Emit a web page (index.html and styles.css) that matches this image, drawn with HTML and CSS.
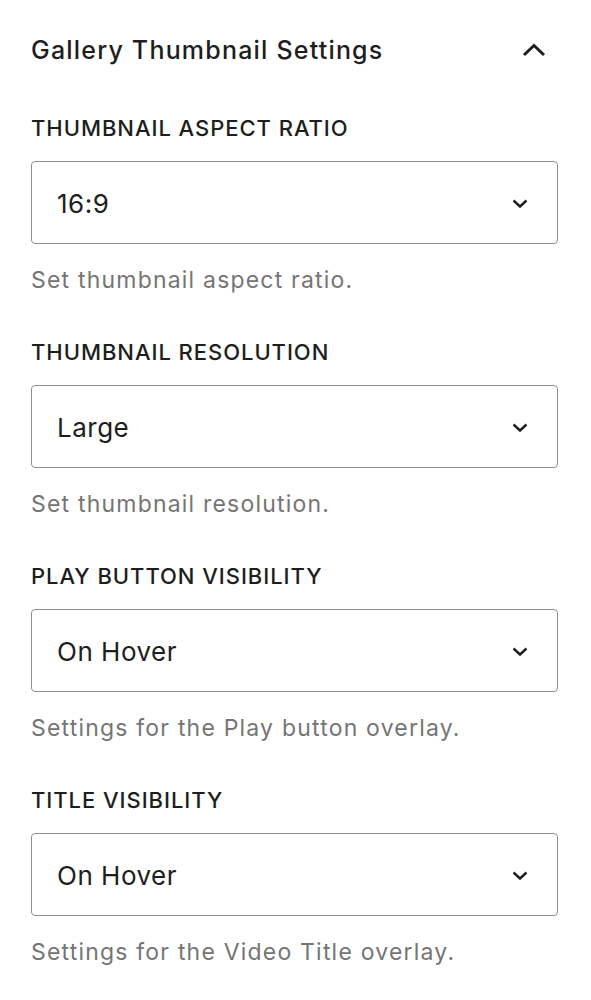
FILE: index.html
```html
<!DOCTYPE html>
<html lang="en">

<head>
    <meta charset="UTF-8">
    <meta name="viewport" content="width=device-width, initial-scale=1.0">
    <title>Gallery Thumbnail Settings</title>
    <link rel="stylesheet" href="styles.css">
</head>

<body>
    <div class="panel">
        <!-- Panel header -->
        <div class="panel-header">
            <h2>Gallery Thumbnail Settings</h2>
            <svg class="toggle" width="24" height="24" viewBox="0 0 24 24">
                <path d="M2 17 L12 7.5 L22 17" fill="none" stroke="#1e1e1e" stroke-width="3"/>
            </svg>
        </div>

        <!-- Fields -->
        <div class="field">
            <label>Thumbnail Aspect Ratio</label>
            <div class="select">
                <span>16:9</span>
                <svg width="16" height="10" viewBox="0 0 16 10">
                    <path d="M1.5 1.5 L8 7.5 L14.5 1.5" fill="none" stroke="#1e1e1e" stroke-width="2.4"/>
                </svg>
            </div>
            <p class="help">Set thumbnail aspect ratio.</p>
        </div>

        <div class="field">
            <label>Thumbnail Resolution</label>
            <div class="select">
                <span>Large</span>
                <svg width="16" height="10" viewBox="0 0 16 10">
                    <path d="M1.5 1.5 L8 7.5 L14.5 1.5" fill="none" stroke="#1e1e1e" stroke-width="2.4"/>
                </svg>
            </div>
            <p class="help">Set thumbnail resolution.</p>
        </div>

        <div class="field">
            <label>Play Button Visibility</label>
            <div class="select">
                <span>On Hover</span>
                <svg width="16" height="10" viewBox="0 0 16 10">
                    <path d="M1.5 1.5 L8 7.5 L14.5 1.5" fill="none" stroke="#1e1e1e" stroke-width="2.4"/>
                </svg>
            </div>
            <p class="help">Settings for the Play button overlay.</p>
        </div>

        <div class="field">
            <label>Title Visibility</label>
            <div class="select">
                <span>On Hover</span>
                <svg width="16" height="10" viewBox="0 0 16 10">
                    <path d="M1.5 1.5 L8 7.5 L14.5 1.5" fill="none" stroke="#1e1e1e" stroke-width="2.4"/>
                </svg>
            </div>
            <p class="help">Settings for the Video Title overlay.</p>
        </div>
    </div>
</body>
</html>
```

FILE: styles.css
```css
body {
    font-family: 'Inter', 'Noto Sans', sans-serif;
    margin: 0;
    padding: 0;
    background-color: #FFFFFF;
    color: #1E1E1E;
}

.panel {
    padding: 0 33px 0 31px;
}

.panel-header {
    display: flex;
    align-items: center;
    justify-content: space-between;
    height: 100px;
}

.panel-header h2 {
    margin: 0;
    font-size: 25px;
    font-weight: 500;
    letter-spacing: 1.2px;
}

.toggle {
    margin-right: 12px;
}

.field {
    display: flex;
    flex-direction: column;
    margin-top: 16px;
}

.field + .field {
    margin-top: 47px;
}

.field label {
    font-size: 22px;
    line-height: 24px;
    font-weight: 500;
    letter-spacing: 0.95px;
    text-transform: uppercase;
    margin-bottom: 21px;
}

.select {
    display: flex;
    align-items: center;
    justify-content: space-between;
    height: 83px;
    box-sizing: border-box;
    border: 1.5px solid #8F8F8F;
    border-radius: 4px;
    padding: 2px 29px 0 25px;
    font-size: 26px;
    letter-spacing: 0.5px;
}

.help {
    margin: 23px 0 0;
    font-size: 23px;
    line-height: 26px;
    letter-spacing: 1.2px;
    color: #757575;
}
```
